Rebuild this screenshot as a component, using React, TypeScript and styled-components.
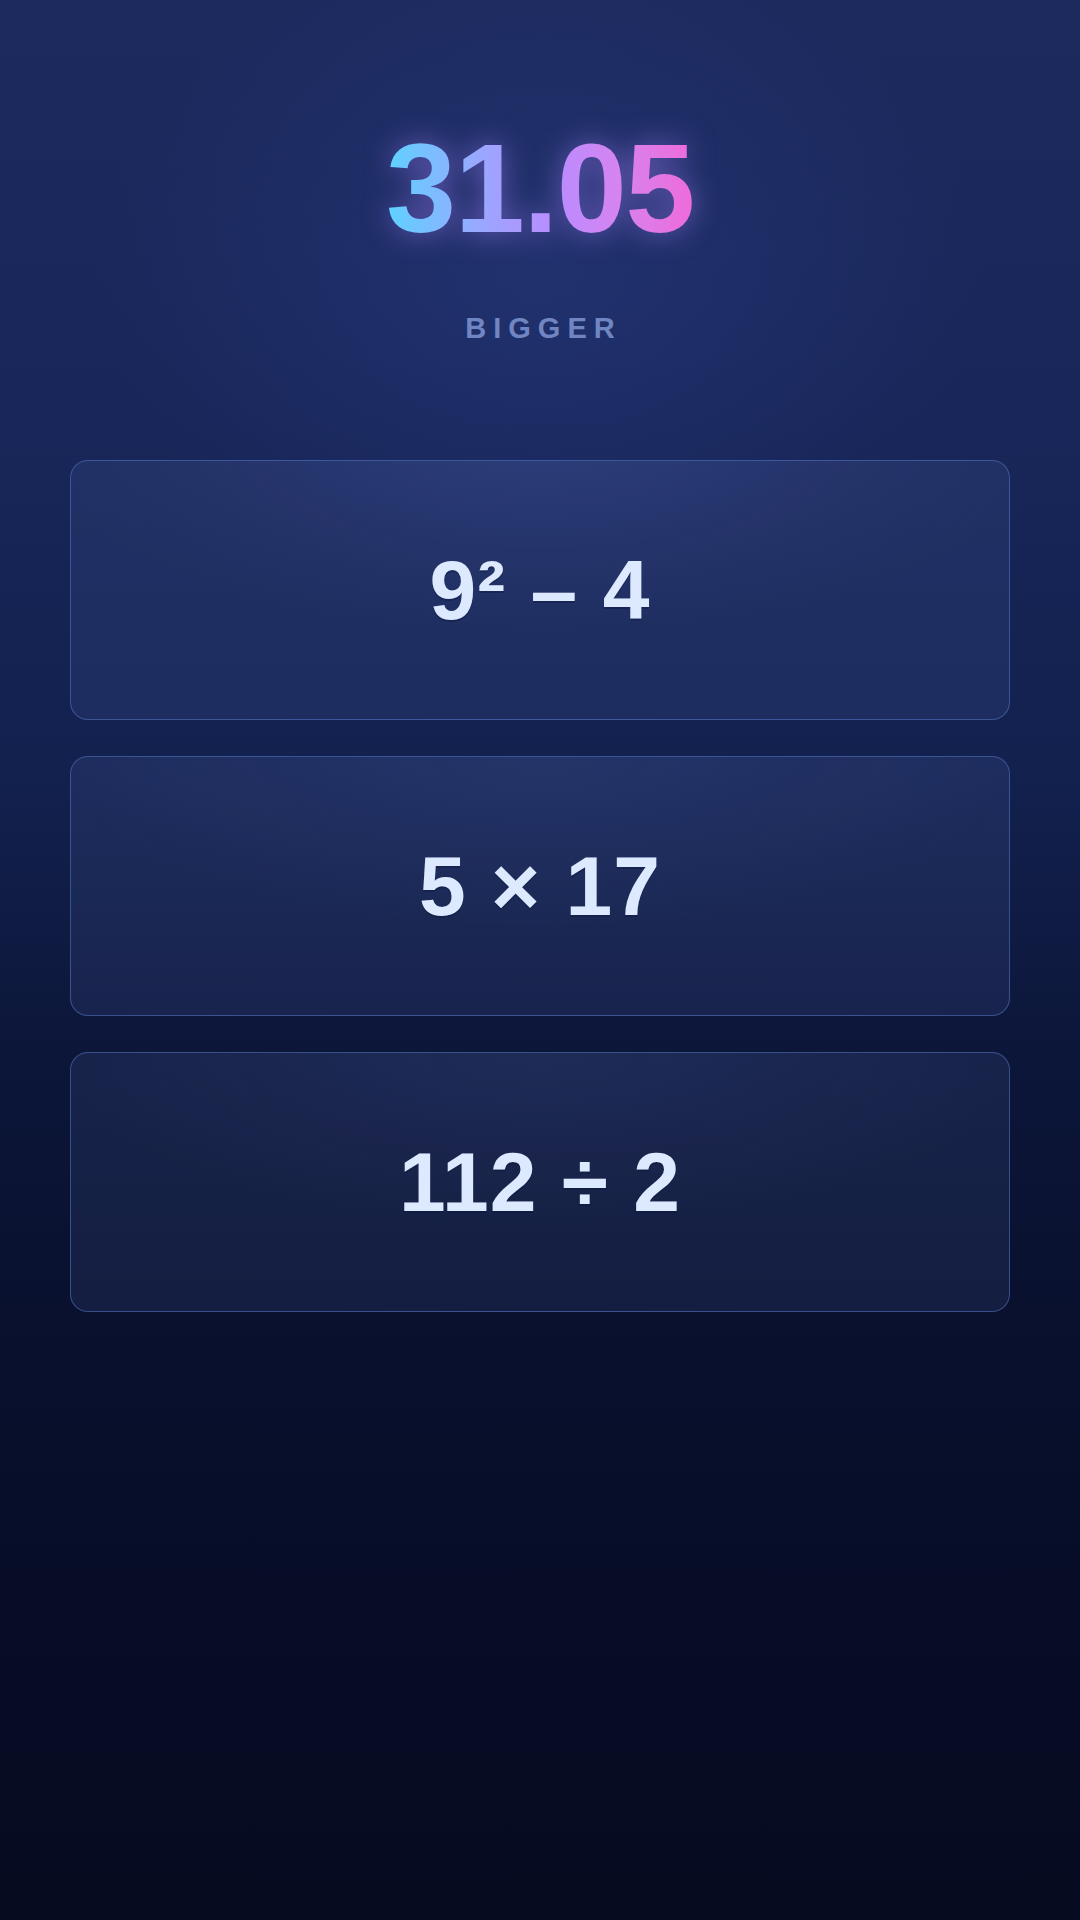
import React from "react";
import styled, { createGlobalStyle } from "styled-components";

const GlobalStyle = createGlobalStyle`
  html, body {
    margin: 0;
    padding: 0;
  }
  body {
    min-height: 1920px;
    background:
      radial-gradient(ellipse 620px 460px at 50% 14%, rgba(44, 64, 138, 0.42), rgba(44, 64, 138, 0) 72%),
      linear-gradient(180deg, #1c2a5e 0%, #182659 22%, #13214f 40%, #0c1639 55%, #09112f 68%, #070d27 82%, #060b20 100%);
    background-repeat: no-repeat;
    background-size: 1080px 1920px;
    font-family: "Liberation Sans", Arial, sans-serif;
  }
`;

const Page = styled.main`
  display: flex;
  flex-direction: column;
  align-items: center;
  padding: 126px 70px 0;
  min-height: 1920px;
  box-sizing: border-box;
`;

const Score = styled.h1`
  margin: 0;
  font-family: "Liberation Sans", Arial, sans-serif;
  font-weight: 700;
  font-size: 126px;
  line-height: 1;
  letter-spacing: -1.5px;
  background: linear-gradient(90deg, #5ed2ff 0%, #99a8ff 30%, #b98cff 55%, #d584f0 75%, #ee6bd9 100%);
  -webkit-background-clip: text;
  background-clip: text;
  color: transparent;
  filter: drop-shadow(0 0 14px rgba(170, 130, 255, 0.55));
`;

const Hint = styled.div`
  margin-top: 62px;
  font-family: "Liberation Sans", Arial, sans-serif;
  font-weight: 700;
  font-size: 29px;
  line-height: 1;
  letter-spacing: 7px;
  padding-left: 7px;
  color: #6f86c2;
`;

const Options = styled.div`
  margin-top: 117px;
  width: 100%;
  display: flex;
  flex-direction: column;
  gap: 36px;
`;

const Option = styled.button`
  height: 260px;
  width: 100%;
  display: flex;
  align-items: center;
  justify-content: center;
  border-radius: 18px;
  border: 1.5px solid rgba(88, 116, 196, 0.55);
  background:
    radial-gradient(ellipse 70% 90% at 50% 0%, rgba(120, 150, 240, 0.08), rgba(120, 150, 240, 0) 75%),
    rgba(100, 122, 196, 0.13);
  box-sizing: border-box;
  padding: 0;
  cursor: pointer;
  font-family: "Liberation Sans", Arial, sans-serif;
  font-weight: 700;
  font-size: 84px;
  line-height: 1;
  letter-spacing: 1px;
  color: #dde9ff;
  text-shadow: 0 2px 0 rgba(10, 20, 60, 0.35);
`;

const options = ["9² – 4", "5 × 17", "112 ÷ 2"];

export default function App() {
  return (
    <>
      <GlobalStyle />
      <Page>
        <Score>31.05</Score>
        <Hint>BIGGER</Hint>
        <Options>
          {options.map((o) => (
            <Option key={o}>{o}</Option>
          ))}
        </Options>
      </Page>
    </>
  );
}
